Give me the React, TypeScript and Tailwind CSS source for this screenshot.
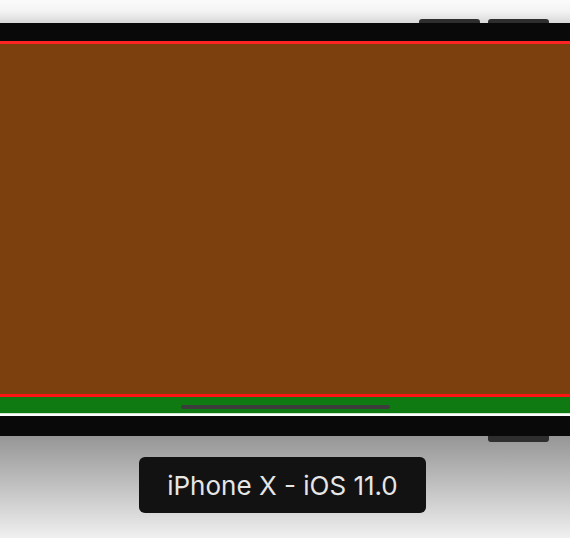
export default function App() {
  return (
    <div className="flex h-[538px] w-[570px] flex-col overflow-hidden font-['Inter',sans-serif]">
      {/* Top backdrop with side buttons */}
      <div className="flex h-[23px] shrink-0 items-end justify-end gap-[8px] bg-gradient-to-b from-[#fbfbfb] via-[#f3f3f3] to-[#d8d8d8] pr-[21px]">
        <div className="h-[4px] w-[61px] rounded-t-[3px] bg-[#2e2e2e]" />
        <div className="h-[4px] w-[61px] rounded-t-[3px] bg-[#2e2e2e]" />
      </div>

      {/* Device body */}
      <div className="h-[18px] shrink-0 bg-[#090909]" />
      <div className="h-[3px] shrink-0 bg-[#ff2424]" />
      <div className="h-[350px] shrink-0 bg-[#7b400d]" />
      <div className="h-[3px] shrink-0 bg-[#ff1414]" />
      <div className="flex h-[16px] shrink-0 items-center justify-center bg-[#107a12]">
        <div className="mt-[4px] h-[4px] w-[209px] rounded-full bg-[#3c3c3c]" />
      </div>
      <div className="h-[1px] shrink-0 bg-[#cfe6cf]" />
      <div className="h-[2px] shrink-0 bg-white" />
      <div className="h-[20px] shrink-0 bg-[#090909]" />

      {/* Bottom backdrop with label */}
      <div className="flex flex-1 flex-col bg-gradient-to-b from-[#969696] to-[#f0f0f0]">
        <div className="flex justify-end pr-[21px]">
          <div className="h-[6px] w-[61px] rounded-b-[3px] bg-[#2e2e2e]" />
        </div>
        <div className="mt-[15px] flex justify-center pr-[5px]">
          <div className="flex h-[56px] w-[287px] items-center justify-center rounded-[6px] bg-[#121212] pt-[1px] text-[26px] text-[#e6e6e6]">
            iPhone X - iOS 11.0
          </div>
        </div>
      </div>
    </div>
  )
}
